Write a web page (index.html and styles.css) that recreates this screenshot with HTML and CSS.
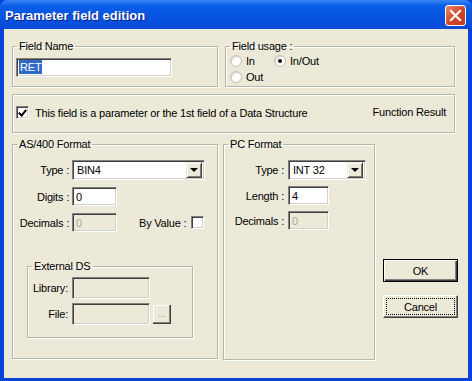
FILE: index.html
```html
<!DOCTYPE html>
<html lang="en">
  <head>
    <meta charset="UTF-8" />
    <title>Parameter field edition</title>
    <link rel="stylesheet" href="styles.css">
  </head>
  <body>
    <div class="window">
      <div class="titlebar">
        <span class="title">Parameter field edition</span>
        <span class="close">
          <svg width="21" height="21" viewBox="0 0 21 21">
            <path d="M6 6 L15 15 M15 6 L6 15" stroke="#fff" stroke-width="2.2" stroke-linecap="square" />
          </svg>
        </span>
      </div>
      <div class="client">
        <div class="row-top">
          <fieldset class="grp name">
            <legend>Field Name</legend>
            <div class="edit name-edit"><span class="sel">RET</span></div>
          </fieldset>
          <fieldset class="grp usage">
            <legend>Field usage :</legend>
            <div class="radios">
              <label class="radio"><span class="dot"></span>In</label>
              <label class="radio"><span class="dot on"></span>In/Out</label>
              <label class="radio"><span class="dot"></span>Out</label>
            </div>
          </fieldset>
        </div>

        <div class="grp param">
          <span class="check on"></span>
          <span class="param-text">This field is a parameter or the 1st field of a Data Structure</span>
          <span class="func">Function Result</span>
        </div>

        <div class="row-bottom">
          <fieldset class="grp as400">
            <legend>AS/400 Format</legend>
            <div class="form">
              <span class="lbl">Type :</span>
              <div class="combo as-type"><span class="val">BIN4</span><span class="arrow"></span></div>
              <span class="lbl">Digits :</span>
              <div class="edit short">0</div>
              <span class="lbl">Decimals :</span>
              <div class="dec-line">
                <div class="edit short off">0</div>
                <span class="byval">By Value :</span>
                <span class="check"></span>
              </div>
            </div>
            <fieldset class="grp extds">
              <legend>External DS</legend>
              <div class="form ext">
                <span class="lbl">Library:</span>
                <div class="edit ext-edit off"></div>
                <span class="lbl">File:</span>
                <div class="file-line">
                  <div class="edit ext-edit off"></div>
                  <span class="dots">...</span>
                </div>
              </div>
            </fieldset>
          </fieldset>

          <fieldset class="grp pc">
            <legend>PC Format</legend>
            <div class="form pc-form">
              <span class="lbl">Type :</span>
              <div class="combo pc-type"><span class="val">INT 32</span><span class="arrow"></span></div>
              <span class="lbl">Length :</span>
              <div class="edit len">4</div>
              <span class="lbl">Decimals :</span>
              <div class="edit len off">0</div>
            </div>
          </fieldset>

          <div class="buttons">
            <button class="btn default">OK</button>
            <button class="btn focus">Cancel</button>
          </div>
        </div>
      </div>
    </div>
  </body>
</html>
```

FILE: styles.css
```css
body {
  margin: 0;
  background: #fff;
  font-family: "Liberation Sans", Arial, sans-serif;
  font-size: 11px;
  letter-spacing: -0.2px;
  color: #000;
}
.window {
  width: 472px;
  height: 381px;
  box-sizing: border-box;
  background: #0842d6;
  padding: 0 4px 3px 4px;
  display: flex;
  flex-direction: column;
}
.titlebar {
  height: 29px;
  display: flex;
  align-items: center;
  justify-content: space-between;
  background: linear-gradient(#3a86f7 0%, #0a5ee8 20%, #0553e0 60%, #0a4bd6 100%);
  margin: 0 -4px;
  padding: 0 6px 0 5px;
  border-radius: 7px 7px 0 0;
}
.title {
  color: #fff;
  font-family: "Liberation Sans", Arial, sans-serif;
  font-weight: bold;
  font-size: 13px;
  letter-spacing: 0;
  text-shadow: 1px 1px 0 #0a1e80;
  margin-top: 1px;
}
.close {
  width: 21px;
  height: 21px;
  box-sizing: border-box;
  border: 1px solid #fff;
  border-radius: 3px;
  background: linear-gradient(135deg, #e9896a, #d0462a 55%, #c0381e);
  display: flex;
  margin-top: 2px;
}
.close svg {
  margin: -1px;
}
.client {
  flex: 1;
  background: #ece9d8;
  padding: 11px 4px 0 8px;
}

/* group boxes */
.grp {
  margin: 0;
  padding: 0;
  min-width: 0;
  border: 1px solid #b9b6a6;
  box-shadow: 1px 1px 0 #fff, inset 1px 1px 0 #fff;
}
.grp legend {
  margin-left: 4px;
  padding: 0 2px;
}
.row-top {
  display: flex;
  gap: 7px;
}
.name {
  width: 206px;
  height: 47px;
  box-sizing: border-box;
}
.usage {
  width: 230px;
  height: 47px;
  box-sizing: border-box;
}

/* edit boxes */
.edit {
  box-sizing: border-box;
  background: #fff;
  border-top: 1px solid #808080;
  border-left: 1px solid #808080;
  border-right: 1px solid #fff;
  border-bottom: 1px solid #fff;
  box-shadow: inset 1px 1px 0 #404040, inset -1px -1px 0 #d4d0c8;
  height: 19px;
  padding: 3px 0 0 3px;
  line-height: 13px;
}
.edit.off {
  background: #ece9d8;
  color: #aca899;
}
.name-edit {
  width: 156px;
  margin: 6px 0 0 3px;
  padding: 2px 0 0 2px;
}
.sel {
  background: #316ac5;
  color: #fff;
  padding: 1px 1px;
}

/* radios */
.radios {
  display: grid;
  grid-template-columns: 44px auto;
  row-gap: 3px;
  padding: 2px 0 0 4px;
}
.radio {
  display: flex;
  align-items: center;
  gap: 4px;
  height: 13px;
}
.dot {
  width: 12px;
  height: 12px;
  box-sizing: border-box;
  border-radius: 50%;
  background: #fff;
  border: 1px solid #c4c1b4;
  box-shadow: inset 1px 1px 1px #d8d5c8;
  display: flex;
  align-items: center;
  justify-content: center;
}
.dot.on::after {
  content: "";
  width: 4px;
  height: 4px;
  border-radius: 50%;
  background: #000;
}

/* parameter checkbox line */
.param {
  margin-top: 7px;
  width: 443px;
  height: 39px;
  box-sizing: border-box;
  display: flex;
  align-items: center;
  padding: 0 0 2px 3px;
}
.check {
  width: 13px;
  height: 13px;
  box-sizing: border-box;
  background: #fff;
  border-top: 1px solid #808080;
  border-left: 1px solid #808080;
  border-right: 1px solid #fff;
  border-bottom: 1px solid #fff;
  box-shadow: inset 1px 1px 0 #404040, inset -1px -1px 0 #d4d0c8;
  position: relative;
}
.check.on::after {
  content: "";
  position: absolute;
  left: 3px;
  top: 1px;
  width: 3px;
  height: 6px;
  border-right: 2px solid #000;
  border-bottom: 2px solid #000;
  transform: rotate(40deg);
}
.param-text {
  margin-left: 6px;
}
.func {
  margin-left: auto;
  margin-right: 8px;
  margin-top: -2px;
}

/* bottom area */
.row-bottom {
  display: flex;
  margin-top: 5px;
}
.as400 {
  width: 206px;
  height: 221px;
  box-sizing: border-box;
  flex-shrink: 0;
}
.pc {
  width: 152px;
  height: 222px;
  box-sizing: border-box;
  margin-left: 5px;
  flex-shrink: 0;
}
.form {
  display: grid;
  grid-template-columns: 56px auto;
  column-gap: 3px;
  row-gap: 7px;
  align-items: center;
  margin-top: 10px;
}
.lbl {
  text-align: right;
}
.combo {
  box-sizing: border-box;
  height: 20px;
  background: #fff;
  border-top: 1px solid #808080;
  border-left: 1px solid #808080;
  border-right: 1px solid #fff;
  border-bottom: 1px solid #fff;
  box-shadow: inset 1px 1px 0 #404040, inset -1px -1px 0 #d4d0c8;
  display: flex;
  align-items: center;
  justify-content: space-between;
  padding: 2px;
}
.val {
  padding-left: 2px;
}
.as-type {
  width: 133px;
}
.pc-type {
  width: 78px;
}
.arrow {
  width: 16px;
  height: 16px;
  box-sizing: border-box;
  background: #ece9d8;
  border-top: 1px solid #ece9d8;
  border-left: 1px solid #ece9d8;
  border-right: 1px solid #404040;
  border-bottom: 1px solid #404040;
  box-shadow: inset 1px 1px 0 #fff, inset -1px -1px 0 #808080;
  display: flex;
  align-items: center;
  justify-content: center;
}
.arrow::after {
  content: "";
  border-left: 4px solid transparent;
  border-right: 4px solid transparent;
  border-top: 4px solid #000;
}
.short {
  width: 45px;
}
.dec-line {
  display: flex;
  align-items: center;
}
.byval {
  margin-left: 22px;
  margin-right: 5px;
}
.extds {
  width: 166px;
  height: 78px;
  box-sizing: border-box;
  margin: 28px 0 0 14px;
}
.form.ext {
  grid-template-columns: 40px auto;
  column-gap: 4px;
  row-gap: 4px;
  margin-top: 5px;
}
.ext-edit {
  width: 78px;
  height: 22px;
}
.file-line {
  display: flex;
  align-items: center;
}
.dots {
  width: 18px;
  height: 19px;
  box-sizing: border-box;
  margin-left: 3px;
  border-right: 1px solid #404040;
  border-bottom: 1px solid #404040;
  box-shadow: inset -1px -1px 0 #808080, inset 1px 1px 0 #fff;
  color: #aca899;
  font-size: 10px;
  text-align: center;
  line-height: 17px;
}
.pc-form {
  grid-template-columns: 60px auto;
  column-gap: 4px;
  row-gap: 6px;
}
.len {
  width: 41px;
}
.buttons {
  display: flex;
  flex-direction: column;
  gap: 13px;
  margin: 121px 0 0 8px;
  flex-shrink: 0;
}
.btn {
  width: 75px;
  height: 23px;
  font-family: inherit;
  font-size: 11px;
  letter-spacing: inherit;
  background: #ece9d8;
  border: 1px solid #fff;
  border-right-color: #404040;
  border-bottom-color: #404040;
  box-shadow: inset -1px -1px 0 #808080;
  padding: 0;
}
.btn.default {
  border: 1px solid #000;
  box-shadow: inset 1px 1px 0 #fff, inset -1px -1px 0 #404040, inset -2px -2px 0 #808080;
}
.btn.focus {
  outline: 1px dotted #000;
  outline-offset: -4px;
}
```
